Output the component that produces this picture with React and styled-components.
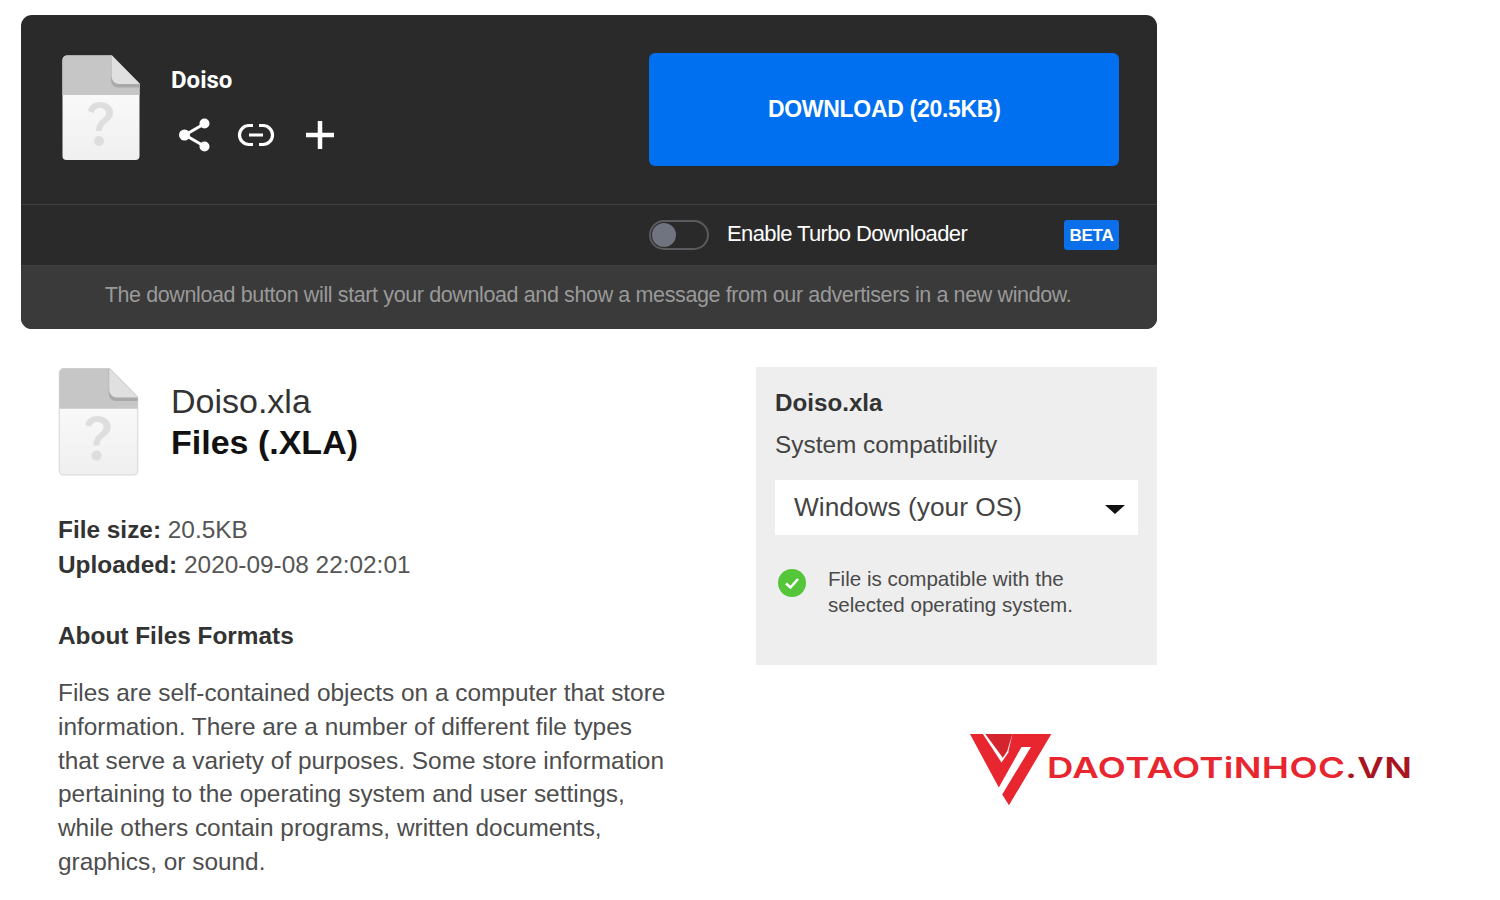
import React from "react";
import styled, { createGlobalStyle } from "styled-components";

const GlobalStyle = createGlobalStyle`
  html, body {
    margin: 0;
    padding: 0;
    background: #fff;
    font-family: "Liberation Sans", Arial, sans-serif;
  }
`;

const Page = styled.div`
  width: 1500px;
  height: 900px;
  overflow: hidden;
  padding: 15px 0 0 21px;
  box-sizing: border-box;
`;

const DownloadCard = styled.section`
  width: 1136px;
  height: 314px;
  border-radius: 11px;
  overflow: hidden;
  background: #2a2a2a;
  display: flex;
  flex-direction: column;
`;

const TopRow = styled.div`
  height: 190px;
  box-sizing: border-box;
  padding: 38px 38px 0 41px;
  display: flex;
  border-bottom: 1px solid #404040;
`;

const FileSide = styled.div`
  width: 587px;
  padding-top: 2px;
  display: flex;
  align-items: flex-start;
`;

const FileMeta = styled.div`
  margin-left: 31px;
  padding-top: 12px;
`;

const FileName = styled.div`
  font-family: Roboto, sans-serif;
  font-weight: 700;
  font-size: 24px;
  line-height: 26px;
  color: #fff;
`;

const Actions = styled.div`
  display: flex;
  align-items: center;
  gap: 26px;
  margin: 24px 0 0 7px;
`;

const DownloadButton = styled.button`
  width: 470px;
  height: 113px;
  margin-left: 1px;
  border: none;
  border-radius: 6px;
  background: #0070f0;
  color: #fff;
  font-family: "Liberation Sans", sans-serif;
  font-weight: 700;
  font-size: 23px;
  letter-spacing: -0.3px;
`;

const TurboRow = styled.div`
  height: 61px;
  box-sizing: border-box;
  padding: 0 38px 0 628px;
  display: flex;
  align-items: center;
  border-bottom: 1px solid #404040;
`;

const Toggle = styled.div`
  width: 60px;
  height: 30px;
  box-sizing: border-box;
  border: 2px solid #5b5b5f;
  border-radius: 15px;
  padding: 1px;
  flex: none;
`;

const Knob = styled.div`
  width: 24px;
  height: 24px;
  border-radius: 50%;
  background: #6f7480;
`;

const TurboLabel = styled.div`
  margin-left: 18px;
  padding-bottom: 2px;
  flex: 1;
  color: #fff;
  font-size: 22px;
  letter-spacing: -0.62px;
`;

const Beta = styled.div`
  width: 55px;
  height: 30px;
  border-radius: 3px;
  background: #0a6fe8;
  color: #fff;
  font-size: 17px;
  font-weight: 700;
  letter-spacing: -0.3px;
  line-height: 31px;
  text-align: center;
`;

const Notice = styled.div`
  flex: 1;
  background: #3a3a3a;
  color: #999;
  font-size: 21.5px;
  letter-spacing: -0.38px;
  display: flex;
  align-items: center;
  justify-content: center;
  padding: 0 2px 5px 0;
`;

const Lower = styled.div`
  display: flex;
  margin-top: 39px;
`;

const Details = styled.div`
  width: 735px;
  padding-left: 37px;
  box-sizing: border-box;
  flex: none;
`;

const Heading = styled.div`
  display: flex;
  align-items: flex-start;
`;

const Titles = styled.div`
  margin-left: 32px;
  padding-top: 13px;
`;

const Title = styled.div`
  font-size: 34px;
  line-height: 41px;
  color: #333;
`;

const Subtitle = styled.div`
  font-size: 34px;
  line-height: 41px;
  font-weight: 700;
  color: #111;
`;

const Facts = styled.div`
  margin-top: 36px;
`;

const Fact = styled.div`
  font-size: 24.4px;
  line-height: 35px;
  color: #555;
  b {
    color: #333;
  }
`;

const SectionTitle = styled.div`
  margin-top: 36px;
  font-size: 24.4px;
  line-height: 35px;
  font-weight: 700;
  color: #333;
`;

const Body = styled.p`
  margin: 23px 0 0;
  width: 615px;
  font-size: 24.4px;
  line-height: 33.8px;
  color: #4d4d4d;
`;

const SideColumn = styled.div`
  width: 655px;
  flex: none;
`;

const CompatPanel = styled.aside`
  width: 401px;
  height: 298px;
  margin-top: -1px;
  box-sizing: border-box;
  padding: 15px 19px 0;
  background: #eee;
`;

const CompatName = styled.div`
  font-size: 24.2px;
  line-height: 41px;
  font-weight: 700;
  color: #333;
`;

const CompatLabel = styled.div`
  font-size: 24.4px;
  line-height: 43px;
  color: #444;
`;

const SelectBox = styled.div`
  margin-top: 14px;
  height: 55px;
  padding: 0 13px 0 19px;
  background: #fff;
  display: flex;
  align-items: center;
  justify-content: space-between;
  font-size: 26.3px;
  color: #444;
`;

const Caret = styled.span`
  width: 0;
  height: 0;
  margin-top: 3px;
  border-left: 10px solid transparent;
  border-right: 10px solid transparent;
  border-top: 9px solid #111;
`;

const CompatNote = styled.div`
  margin: 31px 0 0 3px;
  display: flex;
  align-items: flex-start;
  gap: 22px;
  font-size: 20.6px;
  line-height: 26px;
  color: #4a4a4a;
`;

const NoteIcon = styled.div`
  margin-top: 3px;
  height: 28px;
  flex: none;
`;

const Brand = styled.div`
  margin: 69px 0 0 214px;
  display: flex;
  height: 71px;
`;

const BrandName = styled.div`
  margin: 17px 0 0 -5px;
  height: 34px;
  font-family: Inter, sans-serif;
  font-size: 29px;
  line-height: 34px;
  font-weight: 600;
  letter-spacing: 0.3px;
  color: #e8262f;
  white-space: nowrap;
  transform: scaleX(1.26);
  transform-origin: left center;
  span {
    color: #a8141f;
  }
`;

function FileIcon({ width, height, outlined }) {
  const gradientId = outlined ? "pageA" : "pageB";
  return (
    <svg width={width} height={height} viewBox="0 0 78 106" style={{ flex: "none" }}>
      <defs>
        <linearGradient id={gradientId} x1="0" y1="0" x2="0" y2="1">
          <stop offset="0" stopColor="#fff" />
          <stop offset="1" stopColor="#efefef" />
        </linearGradient>
      </defs>
      <path
        d="M5 .5h45l27.500 28V101a4 4 0 0 1-4 4H4.500a4 4 0 0 1-4-4V5A4.500 4.500 0 0 1 5 .5z"
        fill={`url(#${gradientId})`}
        stroke={outlined ? "#d6d6d6" : "none"}
      />
      <path d="M5 .5h45l27.500 28V40H.5V5A4.500 4.500 0 0 1 5 .5z" fill="#c6c6c6" />
      <path d="M49 .5l28.500 29v3H56a7 7 0 0 1-7-7z" fill="#a9a9a9" />
      <path d="M49.500 .5l28 28.500H57a7.500 7.500 0 0 1-7.500-7.500z" fill="#e0e0e0" />
      <path
        d="M26 56c1-6 6-9 12-9 7 0 13 4 13 11 0 9-11 9-11 18h-6c0-11 10-12 10-18 0-3-3-5-6-5s-6 2-6 5z"
        fill="#dedede"
      />
      <circle cx="37" cy="86" r="5" fill="#dedede" />
    </svg>
  );
}

const ShareIcon = () => (
  <svg width="33" height="36" viewBox="0 0 33 36">
    <path d="M26 7L7 18l19 11" fill="none" stroke="#fff" strokeWidth="3" />
    <circle cx="26.500" cy="6.500" r="5" fill="#fff" />
    <circle cx="6.500" cy="18" r="5.500" fill="#fff" />
    <circle cx="26.500" cy="29.500" r="5" fill="#fff" />
  </svg>
);

const LinkIcon = () => (
  <svg width="38" height="26" viewBox="0 0 38 26">
    <path
      d="M16 3.500H12a9.500 9.500 0 0 0 0 19h4M22 3.500h4a9.500 9.500 0 0 1 0 19h-4"
      fill="none"
      stroke="#fff"
      strokeWidth="3.200"
    />
    <path d="M12 13h14" stroke="#fff" strokeWidth="3.200" />
  </svg>
);

const PlusIcon = () => (
  <svg width="34" height="30" viewBox="-4 0 34 30">
    <path d="M15 1v28M1 15h28" stroke="#fff" strokeWidth="4.500" />
  </svg>
);

const CheckBadge = () => (
  <svg width="28" height="28" viewBox="0 0 28 28">
    <circle cx="14" cy="14" r="14" fill="#55c63a" />
    <path d="M8 14.500l4.500 4L20 10" fill="none" stroke="#fff" strokeWidth="2.600" />
  </svg>
);

const BrandMark = () => (
  <svg width="82" height="72" viewBox="15 22 242 212" style={{ flex: "none" }}>
    <path d="M15 22h38l55 84 37-54 23 6-68 122z" fill="#e8262f" />
    <path d="M60 22h80l-15 50-13 20z" fill="#d4252e" />
    <path d="M140 22h115L130 232l-20-32 85-140h-30l-37 15z" fill="#e8262f" />
  </svg>
);

export default function App() {
  return (
    <Page>
      <GlobalStyle />
      <DownloadCard>
        <TopRow>
          <FileSide>
            <FileIcon width={78} height={106} />
            <FileMeta>
              <FileName>Doiso</FileName>
              <Actions>
                <ShareIcon />
                <LinkIcon />
                <PlusIcon />
              </Actions>
            </FileMeta>
          </FileSide>
          <DownloadButton>DOWNLOAD (20.5KB)</DownloadButton>
        </TopRow>
        <TurboRow>
          <Toggle>
            <Knob />
          </Toggle>
          <TurboLabel>Enable Turbo Downloader</TurboLabel>
          <Beta>BETA</Beta>
        </TurboRow>
        <Notice>
          The download button will start your download and show a message from our advertisers in a new window.
        </Notice>
      </DownloadCard>
      <Lower>
        <Details>
          <Heading>
            <FileIcon width={81} height={108} outlined />
            <Titles>
              <Title>Doiso.xla</Title>
              <Subtitle>Files (.XLA)</Subtitle>
            </Titles>
          </Heading>
          <Facts>
            <Fact>
              <b>File size:</b> 20.5KB
            </Fact>
            <Fact>
              <b>Uploaded:</b> 2020-09-08 22:02:01
            </Fact>
          </Facts>
          <SectionTitle>About Files Formats</SectionTitle>
          <Body>
            Files are self-contained objects on a computer that store information. There are a number of different file
            types that serve a variety of purposes. Some store information pertaining to the operating system and user
            settings, while others contain programs, written documents, graphics, or sound.
          </Body>
        </Details>
        <SideColumn>
          <CompatPanel>
            <CompatName>Doiso.xla</CompatName>
            <CompatLabel>System compatibility</CompatLabel>
            <SelectBox>
              Windows (your OS)
              <Caret />
            </SelectBox>
            <CompatNote>
              <NoteIcon>
                <CheckBadge />
              </NoteIcon>
              <div>
                File is compatible with the
                <br />
                selected operating system.
              </div>
            </CompatNote>
          </CompatPanel>
          <Brand>
            <BrandMark />
            <BrandName>
              DAOTAOTiNHOC<span>.VN</span>
            </BrandName>
          </Brand>
        </SideColumn>
      </Lower>
    </Page>
  );
}
